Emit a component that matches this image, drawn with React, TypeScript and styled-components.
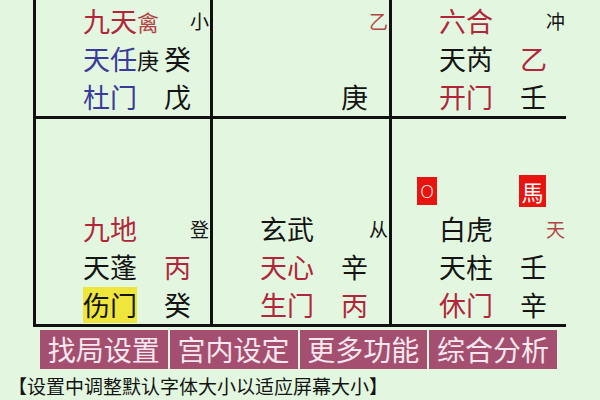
import * as React from 'react';
import styled, { createGlobalStyle } from 'styled-components';

const GlobalStyle = createGlobalStyle`
  html, body {
    margin: 0;
    padding: 0;
    background: #e3f7e0;
    overflow: hidden;
  }
  body {
    font-family: "Noto Sans CJK SC", "Noto Sans", sans-serif;
  }
`;

type Tone = 'red' | 'blue' | 'black' | 'rust';

const TONES: Record<Tone, string> = {
  red: '#b1263b',
  blue: '#3a3a9c',
  black: '#141414',
  rust: '#b2474a',
};

interface Piece {
  text: string;
  tone: Tone;
  mark?: boolean;
}

interface Row {
  name?: Piece;
  suffix?: Piece;
  stem?: Piece;
  corner?: Piece;
}

interface Palace {
  rows: Row[];
  badges?: boolean;
}

const Page = styled.div`
  width: 600px;
  height: 400px;
  display: flex;
  flex-direction: column;
`;

const Board = styled.div`
  margin-left: 33px;
  width: 533px;
  box-sizing: border-box;
  display: grid;
  grid-template-columns: 174px 176px 174px;
  grid-template-rows: 116px 205px;
  gap: 3px;
  padding: 0 3px 3px 3px;
  background: #111;
`;

const Cell = styled.div`
  background: #e3f7e0;
  display: flex;
  flex-direction: column;
  justify-content: flex-end;
`;

const Line = styled.div`
  height: 38px;
  padding-left: 47px;
  padding-right: 1px;
  display: grid;
  grid-template-columns: 81px 1fr auto;
  align-items: center;
`;

const Name = styled.div`
  display: flex;
  align-items: center;
  white-space: nowrap;
`;

const Glyph = styled.span<{ $tone: Tone; $size: number; $mark?: boolean }>`
  color: ${(p) => TONES[p.$tone]};
  font-size: ${(p) => p.$size}px;
  line-height: 36px;
  height: 36px;
  display: inline-block;
  background: ${(p) => (p.$mark ? '#efe63c' : 'transparent')};
`;

const BadgeLine = styled.div`
  height: 38px;
  padding-left: 25px;
  display: grid;
  grid-template-columns: 102px auto;
  align-items: center;
  justify-items: start;
`;

const Badge = styled.span<{ $wide?: boolean }>`
  background: #e8140f;
  color: #fff;
  height: ${(p) => (p.$wide ? 32 : 28)}px;
  width: ${(p) => (p.$wide ? 27 : 20)}px;
  display: flex;
  align-items: center;
  justify-content: center;
  font-family: ${(p) => (p.$wide ? 'inherit' : '"DejaVu Sans", sans-serif')};
  font-weight: ${(p) => (p.$wide ? 400 : 200)};
  font-size: ${(p) => (p.$wide ? 22 : 18)}px;
`;

const Toolbar = styled.div`
  margin: 3px 0 0 40px;
  width: 517px;
  display: flex;
  gap: 2px;
`;

const ToolButton = styled.div`
  flex: 1;
  height: 39px;
  background: #a44f6f;
  color: #f7e7ee;
  font-size: 28px;
  line-height: 39px;
  text-align: center;
  white-space: nowrap;
`;

const Hint = styled.div`
  margin: 5px 0 0 8px;
  font-size: 19px;
  line-height: 24px;
  color: #141414;
  white-space: nowrap;
`;

const p = (text: string, tone: Tone, mark?: boolean): Piece => ({ text, tone, mark });

const PALACES: Palace[] = [
  {
    rows: [
      { name: p('九天', 'red'), suffix: p('禽', 'rust'), corner: p('小', 'black') },
      { name: p('天任', 'blue'), suffix: p('庚', 'black'), stem: p('癸', 'black') },
      { name: p('杜门', 'blue'), stem: p('戊', 'black') },
    ],
  },
  {
    rows: [{ corner: p('乙', 'rust') }, {}, { stem: p('庚', 'black') }],
  },
  {
    rows: [
      { name: p('六合', 'red'), corner: p('冲', 'black') },
      { name: p('天芮', 'black'), stem: p('乙', 'red') },
      { name: p('开门', 'red'), stem: p('壬', 'black') },
    ],
  },
  {
    rows: [
      { name: p('九地', 'red'), corner: p('登', 'black') },
      { name: p('天蓬', 'black'), stem: p('丙', 'red') },
      { name: p('伤门', 'black', true), stem: p('癸', 'black') },
    ],
  },
  {
    rows: [
      { name: p('玄武', 'black'), corner: p('从', 'black') },
      { name: p('天心', 'red'), stem: p('辛', 'black') },
      { name: p('生门', 'red'), stem: p('丙', 'red') },
    ],
  },
  {
    badges: true,
    rows: [
      { name: p('白虎', 'black'), corner: p('天', 'rust') },
      { name: p('天柱', 'black'), stem: p('壬', 'black') },
      { name: p('休门', 'red'), stem: p('辛', 'black') },
    ],
  },
];

const BUTTONS = ['找局设置', '宫内设定', '更多功能', '综合分析'];

function PalaceCell({ palace }: { palace: Palace }) {
  return (
    <Cell>
      {palace.badges && (
        <BadgeLine>
          <Badge>O</Badge>
          <Badge $wide>馬</Badge>
        </BadgeLine>
      )}
      {palace.rows.map((row, i) => (
        <Line key={i}>
          <Name>
            {row.name && (
              <Glyph $tone={row.name.tone} $size={27} $mark={row.name.mark}>
                {row.name.text}
              </Glyph>
            )}
            {row.suffix && (
              <Glyph $tone={row.suffix.tone} $size={22}>
                {row.suffix.text}
              </Glyph>
            )}
          </Name>
          <div>
            {row.stem && (
              <Glyph $tone={row.stem.tone} $size={27}>
                {row.stem.text}
              </Glyph>
            )}
          </div>
          <div>
            {row.corner && (
              <Glyph $tone={row.corner.tone} $size={19}>
                {row.corner.text}
              </Glyph>
            )}
          </div>
        </Line>
      ))}
    </Cell>
  );
}

export default function App() {
  return (
    <Page>
      <GlobalStyle />
      <Board>
        {PALACES.map((palace, i) => (
          <PalaceCell key={i} palace={palace} />
        ))}
      </Board>
      <Toolbar>
        {BUTTONS.map((label) => (
          <ToolButton key={label}>{label}</ToolButton>
        ))}
      </Toolbar>
      <Hint>【设置中调整默认字体大小以适应屏幕大小】</Hint>
    </Page>
  );
}
